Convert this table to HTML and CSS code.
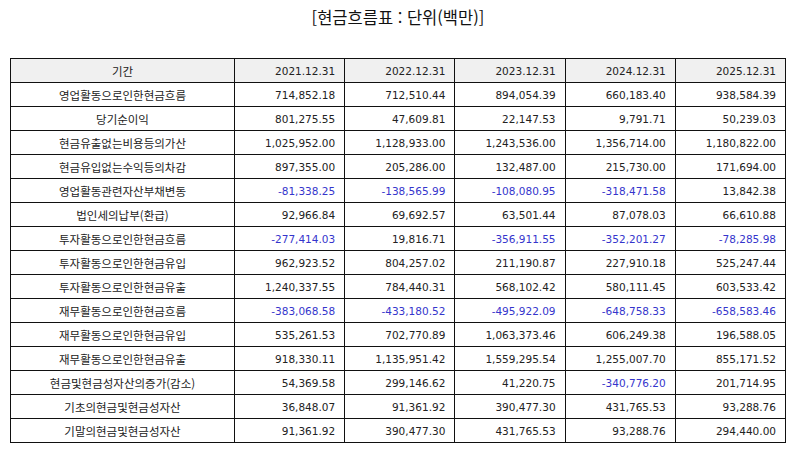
FILE: index.html
```html
<!DOCTYPE html>
<html lang="ko">
<head>
<meta charset="utf-8">
<link rel="stylesheet" href="styles.css">
</head>
<body>
<h1 class="title">[현금흐름표 : 단위(백만)]</h1>
<table class="cf">
<colgroup><col class="c-label"><col><col><col><col><col></colgroup>
<thead>
<tr><th class="label">기간</th><th>2021.12.31</th><th>2022.12.31</th><th>2023.12.31</th><th>2024.12.31</th><th>2025.12.31</th></tr>
</thead>
<tbody>
<tr><td class="label">영업활동으로인한현금흐름</td><td>714,852.18</td><td>712,510.44</td><td>894,054.39</td><td>660,183.40</td><td>938,584.39</td></tr>
<tr><td class="label">당기순이익</td><td>801,275.55</td><td>47,609.81</td><td>22,147.53</td><td>9,791.71</td><td>50,239.03</td></tr>
<tr><td class="label">현금유출없는비용등의가산</td><td>1,025,952.00</td><td>1,128,933.00</td><td>1,243,536.00</td><td>1,356,714.00</td><td>1,180,822.00</td></tr>
<tr><td class="label">현금유입없는수익등의차감</td><td>897,355.00</td><td>205,286.00</td><td>132,487.00</td><td>215,730.00</td><td>171,694.00</td></tr>
<tr><td class="label">영업활동관련자산부채변동</td><td class="neg">-81,338.25</td><td class="neg">-138,565.99</td><td class="neg">-108,080.95</td><td class="neg">-318,471.58</td><td>13,842.38</td></tr>
<tr><td class="label">법인세의납부(환급)</td><td>92,966.84</td><td>69,692.57</td><td>63,501.44</td><td>87,078.03</td><td>66,610.88</td></tr>
<tr><td class="label">투자활동으로인한현금흐름</td><td class="neg">-277,414.03</td><td>19,816.71</td><td class="neg">-356,911.55</td><td class="neg">-352,201.27</td><td class="neg">-78,285.98</td></tr>
<tr><td class="label">투자활동으로인한현금유입</td><td>962,923.52</td><td>804,257.02</td><td>211,190.87</td><td>227,910.18</td><td>525,247.44</td></tr>
<tr><td class="label">투자활동으로인한현금유출</td><td>1,240,337.55</td><td>784,440.31</td><td>568,102.42</td><td>580,111.45</td><td>603,533.42</td></tr>
<tr><td class="label">재무활동으로인한현금흐름</td><td class="neg">-383,068.58</td><td class="neg">-433,180.52</td><td class="neg">-495,922.09</td><td class="neg">-648,758.33</td><td class="neg">-658,583.46</td></tr>
<tr><td class="label">재무활동으로인한현금유입</td><td>535,261.53</td><td>702,770.89</td><td>1,063,373.46</td><td>606,249.38</td><td>196,588.05</td></tr>
<tr><td class="label">재무활동으로인한현금유출</td><td>918,330.11</td><td>1,135,951.42</td><td>1,559,295.54</td><td>1,255,007.70</td><td>855,171.52</td></tr>
<tr><td class="label">현금및현금성자산의증가(감소)</td><td>54,369.58</td><td>299,146.62</td><td>41,220.75</td><td class="neg">-340,776.20</td><td>201,714.95</td></tr>
<tr><td class="label">기초의현금및현금성자산</td><td>36,848.07</td><td>91,361.92</td><td>390,477.30</td><td>431,765.53</td><td>93,288.76</td></tr>
<tr><td class="label">기말의현금및현금성자산</td><td>91,361.92</td><td>390,477.30</td><td>431,765.53</td><td>93,288.76</td><td>294,440.00</td></tr>
</tbody>
</table>
</body>
</html>
```
FILE: styles.css
```css
html, body {
  margin: 0;
  padding: 0;
  background: #ffffff;
}
body {
  font-family: "Noto Sans CJK KR", "Noto Sans", sans-serif;
  color: #222222;
  padding: 0 8px 0 10px;
}
.title {
  margin: 0;
  height: 58px;
  padding-top: 6px;
  box-sizing: border-box;
  text-align: center;
  font-size: 16.5px;
  font-weight: normal;
  line-height: 22px;
  color: #111111;
}
.cf {
  width: 776px;
  border-collapse: collapse;
  table-layout: fixed;
  font-family: "DejaVu Sans", "Noto Sans CJK KR", sans-serif;
  font-size: 10.5px;
}
.c-label {
  width: 224px;
}
.cf th, .cf td {
  border: 1px solid #111111;
  height: 24px;
  padding: 0 9px 0 4px;
  text-align: right;
  font-weight: normal;
  line-height: 14px;
  box-sizing: border-box;
  white-space: nowrap;
}
.cf thead th {
  background: #f0f0f0;
}
.cf .label {
  text-align: center;
  padding: 0 4px;
  font-family: "Noto Sans CJK KR", sans-serif;
  font-size: 11.5px;
}
.cf .neg {
  color: #3535cc;
}
```
